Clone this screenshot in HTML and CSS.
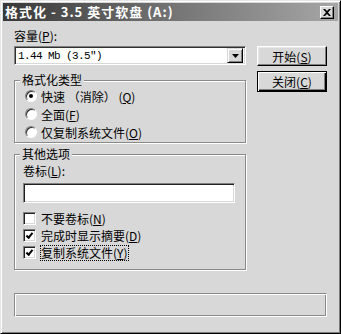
FILE: index.html
```html
<!DOCTYPE html>
<html lang="zh-CN">
<head>
  <meta charset="UTF-8" />
  <title>格式化 - 3.5 英寸软盘 (A:)</title>
  <link rel="stylesheet" href="styles.css">
</head>
<body>
  <div class="window">
    <div class="titlebar">
      <span class="title">格式化 - 3.5 英寸软盘 (A:)</span>
      <span class="close-btn">
        <svg width="8" height="7" viewBox="0 0 8 7"><path d="M0 0h2l2 2 2-2h2L5 3.5 8 7H6L4 5 2 7H0l3-3.5z" fill="#000"/></svg>
      </span>
    </div>

    <div class="content">
      <div class="main-row">
        <div class="left-col">
          <div class="field-label">容量(<u>P</u>):</div>
          <div class="combo">
            <span class="combo-text">1.44 Mb (3.5")</span>
            <span class="combo-btn">
              <svg width="7" height="4" viewBox="0 0 7 4"><path d="M0 0h7L3.5 4z" fill="#000"/></svg>
            </span>
          </div>

          <fieldset class="group group-type">
            <legend>格式化类型</legend>
            <div class="option"><span class="radio checked"></span>快速 （消除） (<u>Q</u>)</div>
            <div class="option"><span class="radio"></span>全面(<u>F</u>)</div>
            <div class="option"><span class="radio"></span>仅复制系统文件(<u>O</u>)</div>
          </fieldset>

          <fieldset class="group group-other">
            <legend>其他选项</legend>
            <div class="field-label inner">卷标(<u>L</u>):</div>
            <div class="textbox"></div>
            <div class="checks">
              <div class="option check-row"><span class="check"></span>不要卷标(<u>N</u>)</div>
              <div class="option check-row"><span class="check checked"></span>完成时显示摘要(<u>D</u>)</div>
              <div class="option check-row"><span class="check checked"></span><span class="focus">复制系统文件(<u>Y</u>)</span></div>
            </div>
          </fieldset>
        </div>

        <div class="right-col">
          <button class="btn">开始(<u>S</u>)</button>
          <button class="btn default">关闭(<u>C</u>)</button>
        </div>
      </div>

      <div class="status"></div>
    </div>
  </div>
</body>
</html>
```

FILE: styles.css
```css
body {
  margin: 0;
  padding: 0;
  background-color: #d8d8d8;
  font-family: "Noto Sans CJK SC", "Liberation Sans", sans-serif;
  font-size: 12px;
  color: #000;
}
u {
  text-decoration: underline;
}
.window {
  box-sizing: border-box;
  width: 341px;
  height: 334px;
  padding: 2px;
  background-color: #d8d8d8;
  border: 1px solid;
  border-color: #e6e6e6 #000 #000 #e6e6e6;
  box-shadow: inset 1px 1px 0 #fff, inset -1px -1px 0 #7c7c7c;
}
.titlebar {
  height: 18px;
  display: flex;
  align-items: center;
  justify-content: space-between;
  background: linear-gradient(to right, #383838, #6e6e6e 45%, #a6a6a6);
  padding-left: 2px;
}
.title {
  color: #fff;
  font-weight: bold;
  font-size: 13px;
  line-height: 18px;
  letter-spacing: 1px;
}
.close-btn {
  box-sizing: border-box;
  width: 14px;
  height: 13px;
  margin-right: 4px;
  display: flex;
  align-items: center;
  justify-content: center;
  background-color: #d8d8d8;
  border: 1px solid;
  border-color: #fff #000 #000 #fff;
  box-shadow: inset -1px -1px 0 #808080;
}
.content {
  padding: 8px 11px 0 11px;
}
.main-row {
  display: flex;
}
.left-col {
  width: 232px;
}
.right-col {
  margin-left: 11px;
  padding-top: 17px;
  display: flex;
  flex-direction: column;
  gap: 5px;
}
.field-label {
  line-height: 14px;
  height: 14px;
}
.combo {
  box-sizing: border-box;
  margin-top: 3px;
  height: 19px;
  display: flex;
  align-items: center;
  background-color: #fff;
  border: 1px solid;
  border-color: #808080 #fff #fff #808080;
  box-shadow: inset 1px 1px 0 #303030, inset -1px -1px 0 #d8d8d8;
  padding: 2px;
}
.combo-text {
  flex: 1;
  font-family: "Liberation Mono", monospace;
  font-size: 11px;
  letter-spacing: -0.6px;
  padding-left: 1px;
}
.combo-btn {
  box-sizing: border-box;
  width: 16px;
  height: 15px;
  display: flex;
  align-items: center;
  justify-content: center;
  background-color: #d8d8d8;
  border: 1px solid;
  border-color: #d8d8d8 #000 #000 #d8d8d8;
  box-shadow: inset 1px 1px 0 #fff, inset -1px -1px 0 #808080;
}
.group {
  margin: 0;
  padding: 0 0 1px 0;
  min-width: 0;
  border: 1px solid #8a8a8a;
  box-shadow: inset 1px 1px 0 #fff, 1px 1px 0 #fff;
}
.group legend {
  margin-left: 5px;
  padding: 0 2px;
  line-height: 14px;
  background-color: #d8d8d8;
}
.group-type {
  margin-top: 8px;
}
.group-other {
  margin-top: 4px;
  padding-bottom: 8px;
}
.option {
  display: flex;
  align-items: center;
  height: 18px;
  padding-left: 10px;
  white-space: nowrap;
}
.radio {
  box-sizing: border-box;
  width: 12px;
  height: 12px;
  margin-right: 4px;
  border-radius: 50%;
  background-color: #fff;
  border: 1px solid;
  border-color: #808080 #fff #fff #808080;
  box-shadow: inset 1px 1px 0 #303030;
  display: flex;
  align-items: center;
  justify-content: center;
}
.radio.checked::after {
  content: "";
  width: 4px;
  height: 4px;
  border-radius: 50%;
  background-color: #000;
}
.field-label.inner {
  margin-top: 3px;
  padding-left: 8px;
}
.textbox {
  box-sizing: border-box;
  margin: 5px 0 0 8px;
  width: 212px;
  height: 20px;
  background-color: #fff;
  border: 1px solid;
  border-color: #808080 #fff #fff #808080;
  box-shadow: inset 1px 1px 0 #202020, inset -1px -1px 0 #d8d8d8;
}
.checks {
  margin-top: 7px;
}
.check-row {
  height: 17px;
  padding-left: 8px;
}
.check {
  box-sizing: border-box;
  width: 13px;
  height: 13px;
  margin-right: 5px;
  background-color: #fff;
  border: 1px solid;
  border-color: #808080 #fff #fff #808080;
  box-shadow: inset 1px 1px 0 #202020, inset -1px -1px 0 #d8d8d8;
  display: flex;
  align-items: center;
  justify-content: center;
}
.check.checked::after {
  content: "";
  width: 5px;
  height: 2px;
  margin-top: -2px;
  border-left: 2px solid #000;
  border-bottom: 2px solid #000;
  transform: rotate(-50deg);
}
.focus {
  outline: 1px dotted #000;
  outline-offset: 0;
  line-height: 14px;
}
.btn {
  box-sizing: border-box;
  width: 70px;
  height: 20px;
  padding: 0;
  font-family: "Noto Sans CJK SC", "Liberation Sans", sans-serif;
  font-size: 12px;
  color: #000;
  background-color: #d8d8d8;
  border: 1px solid;
  border-color: #fff #000 #000 #fff;
  box-shadow: inset -1px -1px 0 #808080, inset 1px 1px 0 #e8e8e8;
  cursor: pointer;
}
.btn.default {
  height: 21px;
  border: 1px solid #000;
  box-shadow: inset 1px 1px 0 #fff, inset -1px -1px 0 #000, inset -2px -2px 0 #808080;
}
.status {
  box-sizing: border-box;
  margin-top: 23px;
  height: 24px;
  border: 1px solid;
  border-color: #8a8a8a #fff #fff #8a8a8a;
  box-shadow: inset 1px 1px 0 #fff, inset -1px -1px 0 #8a8a8a;
}
```
